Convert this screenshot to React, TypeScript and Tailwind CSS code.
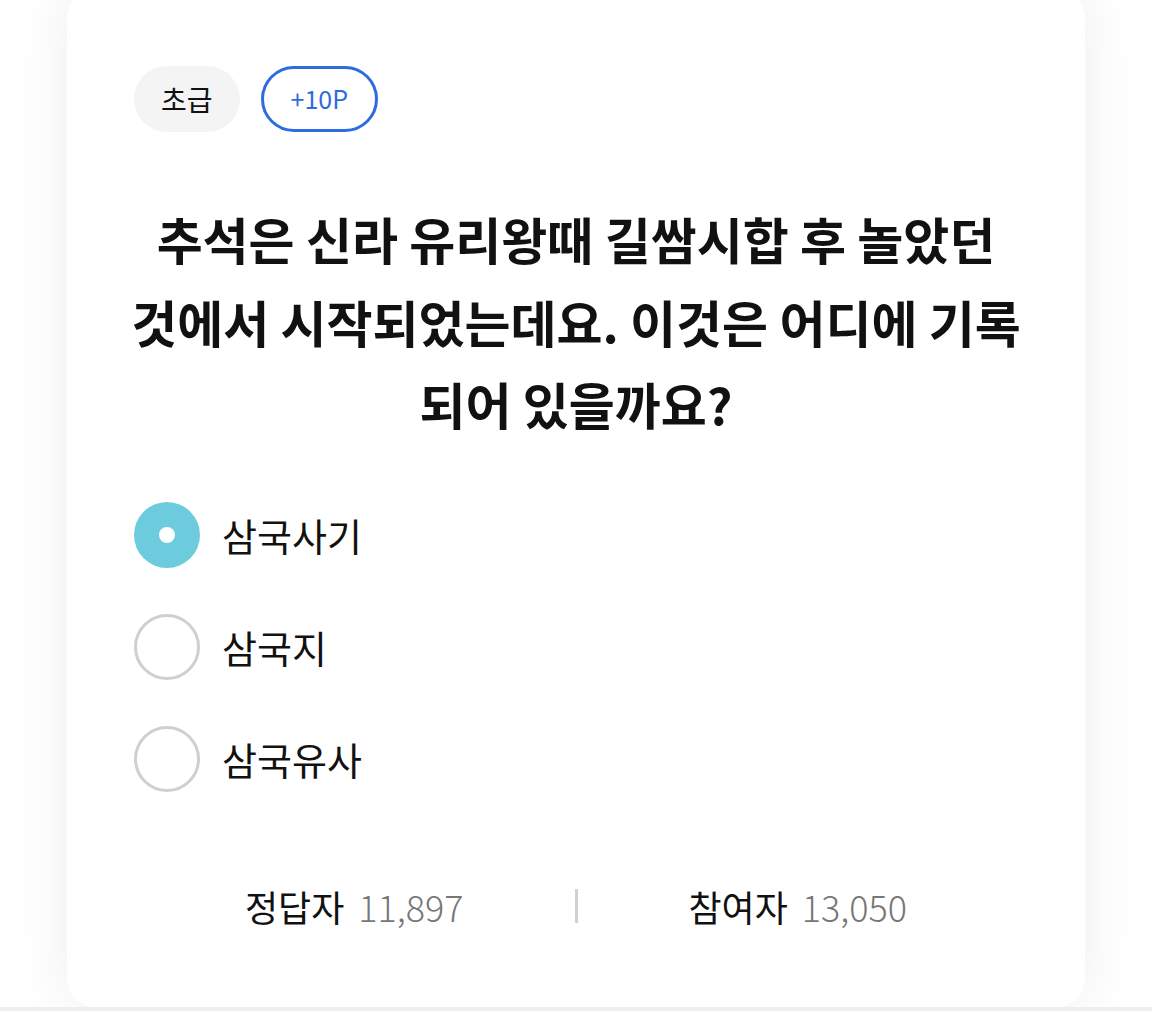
import React from 'react';

type Option = { id: number; label: string };

const options: Option[] = [
  { id: 1, label: '삼국사기' },
  { id: 2, label: '삼국지' },
  { id: 3, label: '삼국유사' },
];

const font = { fontFamily: '"Noto Sans CJK KR", "Noto Sans", sans-serif' };

const Radio: React.FC<{ checked: boolean }> = ({ checked }) =>
  checked ? (
    <div className="w-[66px] h-[66px] rounded-full bg-[#6ccbdd] flex items-center justify-center shrink-0">
      <div className="w-[16px] h-[16px] rounded-full bg-white" />
    </div>
  ) : (
    <div className="w-[66px] h-[66px] rounded-full border-[3px] border-[#cfcfcf] bg-white shrink-0" />
  );

export default function App() {
  const selected = 1;
  return (
    <div className="min-h-[1011px] bg-white overflow-hidden" style={font}>
      <div className="w-[1018px] mx-auto -mt-[10px] bg-white rounded-[28px] shadow-[0_0_60px_rgba(0,0,0,0.07)] px-[67px] pt-[76px] pb-[74px]">
        {/* badges */}
        <div className="flex items-center gap-[21px]">
          <span className="h-[66px] px-[27px] rounded-full bg-[#f4f4f4] flex items-center text-[28px] text-[#111]">
            초급
          </span>
          <span className="h-[66px] px-[27px] rounded-full border-[3px] border-[#2f6be0] flex items-center text-[25px] text-[#2f6be0]">
            +10P
          </span>
        </div>

        {/* question */}
        <h2 className="mt-[65px] -mx-[20px] text-center text-[50px] leading-[82.5px] font-bold text-[#111]">
          추석은 신라 유리왕때 길쌈시합 후 놀았던
          <br />
          것에서 시작되었는데요. 이것은 어디에 기록
          <br />
          되어 있을까요?
        </h2>

        {/* options */}
        <ul className="mt-[57px] flex flex-col gap-[46px]">
          {options.map((o) => (
            <li key={o.id} className="flex items-center gap-[22px] cursor-pointer">
              <Radio checked={o.id === selected} />
              <span className="text-[38px] text-[#111]">{o.label}</span>
            </li>
          ))}
        </ul>

        {/* stats */}
        <div className="mt-[87px] flex items-center h-[54px]">
          <div className="flex-1 flex justify-center items-baseline gap-[14px] text-[36px]">
            <span className="text-[#111]">정답자</span>
            <span className="text-[#777] font-light">11,897</span>
          </div>
          <div className="w-[3px] h-[34px] bg-[#d0d0d0]" />
          <div className="flex-1 flex justify-center items-baseline gap-[14px] text-[36px]">
            <span className="text-[#111]">참여자</span>
            <span className="text-[#777] font-light">13,050</span>
          </div>
        </div>
      </div>
      <div className="h-[10px] bg-[#efefef]" />
    </div>
  );
}
